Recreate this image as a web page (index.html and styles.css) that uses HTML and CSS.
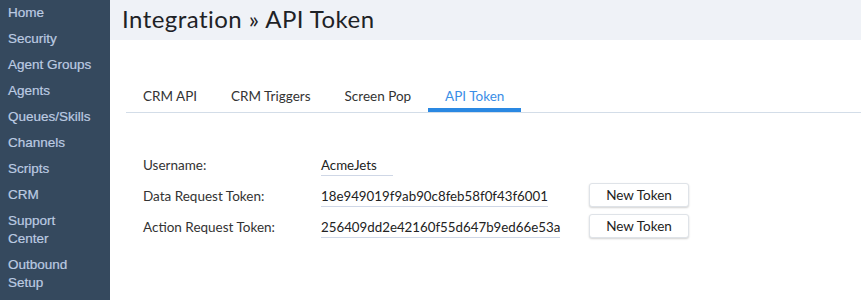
FILE: index.html
```html
<!DOCTYPE html>
<html>
<head>
<meta charset="utf-8">
<link rel="stylesheet" href="styles.css">
</head>
<body>
<div class="app">
  <nav class="sidebar">
    <a class="nav-item">Home</a>
    <a class="nav-item">Security</a>
    <a class="nav-item">Agent Groups</a>
    <a class="nav-item">Agents</a>
    <a class="nav-item">Queues/Skills</a>
    <a class="nav-item">Channels</a>
    <a class="nav-item">Scripts</a>
    <a class="nav-item">CRM</a>
    <a class="nav-item">Support<br>Center</a>
    <a class="nav-item">Outbound<br>Setup</a>
  </nav>
  <main class="main">
    <header class="page-header">
      <h1 class="page-title">Integration » API Token</h1>
    </header>
    <div class="tabs">
      <span class="tab">CRM API</span>
      <span class="tab">CRM Triggers</span>
      <span class="tab">Screen Pop</span>
      <span class="tab tab-active">API Token</span>
    </div>
    <div class="form">
      <div class="label">Username:</div>
      <div class="value-cell"><span class="value value-min">AcmeJets</span></div>
      <div></div>

      <div class="label">Data Request Token:</div>
      <div class="value-cell"><span class="value">18e949019f9ab90c8feb58f0f43f6001</span></div>
      <div><button class="btn">New Token</button></div>

      <div class="label">Action Request Token:</div>
      <div class="value-cell"><span class="value">256409dd2e42160f55d647b9ed66e53a</span></div>
      <div><button class="btn">New Token</button></div>
    </div>
  </main>
</div>
</body>
</html>
```

FILE: styles.css
```css
* { box-sizing: border-box; }
html, body { margin: 0; padding: 0; height: 100%; }
body {
  font-family: Lato, "Noto Sans", sans-serif;
  color: #333;
  background: #fff;
}
.app {
  display: flex;
  height: 300px;
  overflow: hidden;
}
.sidebar {
  width: 110px;
  flex: 0 0 110px;
  background: #35495e;
  display: flex;
  flex-direction: column;
}
.nav-item {
  display: block;
  padding: 4px 8px;
  font-family: "Liberation Sans", Arial, sans-serif;
  font-size: 13.5px;
  line-height: 18px;
  color: #bccbe2;
  -webkit-text-stroke: 0.2px #bccbe2;
}
.main {
  flex: 1;
  display: flex;
  flex-direction: column;
}
.page-header {
  height: 40px;
  background: #eff2f7;
  padding-left: 12px;
  display: flex;
  align-items: center;
}
.page-title {
  margin: 0;
  font-size: 24px;
  font-weight: 400;
  letter-spacing: 0.45px;
  color: #1e2226;
  line-height: 30px;
  position: relative;
  top: -1px;
}
.tabs {
  margin: 46px 0 0 16px;
  display: flex;
  border-bottom: 1px solid #d3dde8;
}
.tab {
  padding: 0 17px 2px;
  font-size: 13.5px;
  line-height: 20px;
  color: #333;
  border-bottom: 4px solid transparent;
}
.tab-active {
  color: #3a8ee6;
  border-bottom-color: #2a88e2;
}
.form {
  margin: 39px 0 0 33px;
  display: grid;
  grid-template-columns: 178px 268px auto;
  grid-auto-rows: 31px;
  font-size: 13.5px;
}
.label {
  padding-top: 3px;
  line-height: 20px;
  color: #333;
}
.value-cell { display: flex; align-items: flex-start; }
.value {
  display: inline-block;
  padding-top: 3px;
  line-height: 20px;
  font-size: 13.3px;
  border-bottom: 1px solid #cfd7e6;
  color: #222;
}
.value-min { min-width: 72px; }
.btn {
  width: 100px;
  height: 24px;
  padding: 0;
  font-family: inherit;
  font-size: 13.5px;
  color: #222;
  background: #fff;
  border: 1px solid #dfe3e8;
  border-radius: 3px;
  box-shadow: 0 1px 2px rgba(0,0,0,0.18);
}
```
